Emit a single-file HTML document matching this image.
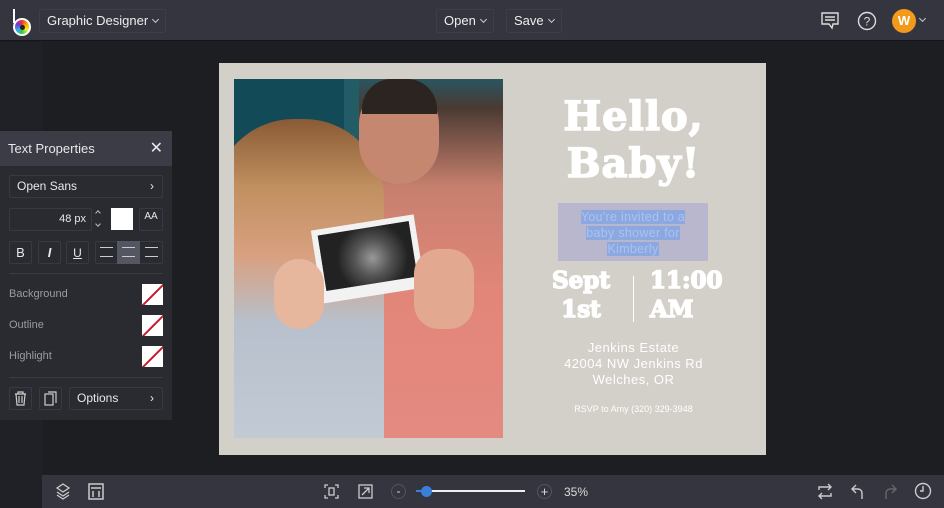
<!DOCTYPE html>
<html><head><meta charset="utf-8"><style>
*{margin:0;padding:0;box-sizing:border-box}
body{width:944px;height:508px;overflow:hidden;background:#1d1e22;font-family:"Liberation Sans",sans-serif;position:relative;color:#e8e8ea}
.abs{position:absolute}
.top{left:0;top:0;width:944px;height:41px;background:#34353f;border-bottom:1px solid #15161a}
.btn{position:absolute;top:9px;height:24px;border:1px solid #3d3e48;border-radius:2px;font-size:13px;line-height:22px;padding:0 7px;color:#eee;white-space:nowrap}
.chev{display:inline-block;width:5px;height:5px;border-right:1.2px solid #ccc;border-bottom:1.2px solid #ccc;transform:rotate(45deg);margin-left:5px;vertical-align:3px}
.side{left:0;top:42px;width:42px;height:466px;background:#202126}
.panel{left:0;top:131px;width:172px;height:289px;background:#2a2b31}
.ph{left:0;top:131px;width:172px;height:35px;background:#3b3c46;font-size:13px;line-height:35px;padding-left:8px}
.box{position:absolute;border:1px solid #383942;border-radius:2px;background:#2a2b31}
.lbl{position:absolute;left:9px;font-size:11px;color:#9a9ba3}
.sw{position:absolute;left:142px;width:21px;height:21px;background:#fff;overflow:hidden}
.sw:after{content:"";position:absolute;left:-4px;top:10px;width:30px;height:2px;background:#c21c2c;transform:rotate(-45deg)}
.card{left:219px;top:63px;width:547px;height:392px;background:#d3cfc9}
.photo{left:234px;top:79px;width:269px;height:359px;background:linear-gradient(90deg,#0f4c5a 0%,#1b5a66 30%,#245c66 45%,#2a5965 60%,#2b5864 100%);overflow:hidden}
.w{color:#fff;text-align:center;position:absolute;font-family:"DejaVu Serif","Liberation Serif",serif;font-weight:900;-webkit-text-stroke:1.5px #fff}
.bottom{left:42px;top:475px;width:902px;height:33px;background:#34353f}
</style></head><body>
<div class="abs top"></div>
<div class="abs" style="left:12px;top:9px;width:20px;height:24px">
<div class="abs" style="left:1px;top:0;width:2px;height:14px;background:#fff"></div>
<div class="abs" style="left:1px;top:9px;width:18px;height:18px;border-radius:50%;border:2px solid #fff;background:conic-gradient(#e33,#fa0,#ee3,#3c4,#3ae,#73d,#e33)"></div>
<div class="abs" style="left:8px;top:16px;width:5px;height:5px;border-radius:50%;background:#222"></div></div>
<div class="btn" style="left:39px">Graphic Designer<span class="chev"></span></div>
<div class="btn" style="left:436px">Open<span class="chev"></span></div>
<div class="btn" style="left:506px">Save<span class="chev"></span></div>
<svg class="abs" style="left:820px;top:11px" width="20" height="20" viewBox="0 0 20 20" fill="none" stroke="#ddd" stroke-width="1.4"><path d="M2 2h16v11h-5l-1 4-3-4H2z"/><path d="M5 6h10M5 9h10" /></svg>
<svg class="abs" style="left:857px;top:11px" width="20" height="20" viewBox="0 0 20 20" fill="none" stroke="#ddd" stroke-width="1.4"><circle cx="10" cy="10" r="8.5"/><text x="10" y="14.5" font-size="12" text-anchor="middle" fill="#ddd" stroke="none" font-family="Liberation Sans">?</text></svg>
<div class="abs" style="left:892px;top:9px;width:24px;height:24px;border-radius:50%;background:#f39a1a;color:#fff;font-weight:bold;font-size:13px;text-align:center;line-height:24px">W</div>
<div class="abs" style="left:920px;top:16px;width:5px;height:5px;border-right:1.2px solid #ccc;border-bottom:1.2px solid #ccc;transform:rotate(45deg)"></div>
<div class="abs side"></div>
<div class="abs card"></div>
<div class="abs photo">
<div class="abs" style="left:0;top:0;width:110px;height:140px;background:#124a58"></div>
<div class="abs" style="left:125px;top:0;width:150px;height:359px;background:linear-gradient(180deg,#2a5560 0%,#4a3a32 8%,#c7806e 30%,#e3867a 60%,#e48a80 100%)"></div>
<div class="abs" style="left:-20px;top:40px;width:170px;height:340px;border-radius:80px 80px 0 0;background:linear-gradient(180deg,#8a5a35 0%,#c09060 20%,#d9a080 40%,#b7c0cc 60%,#c4ccd6 100%)"></div>
<div class="abs" style="left:125px;top:5px;width:80px;height:100px;border-radius:40px;background:#c58770"></div>
<div class="abs" style="left:128px;top:0;width:75px;height:35px;border-radius:30px 30px 0 0;background:#2b2420"></div>
<div class="abs" style="left:82px;top:143px;width:104px;height:74px;background:#f2f2f2;transform:rotate(-9deg)"><div style="margin:6px;height:56px;background:#333 radial-gradient(circle at 55% 55%,#999 0,#555 30%,#222 60%)"></div></div>
<div class="abs" style="left:40px;top:180px;width:50px;height:70px;border-radius:25px;background:#e7b79d"></div>
<div class="abs" style="left:180px;top:170px;width:60px;height:80px;border-radius:25px;background:#e2a890"></div>
</div>
<div class="w" style="left:520px;top:93px;width:227px;font-size:40px;line-height:47px;letter-spacing:1px">Hello,<br>Baby!</div>
<div class="abs" style="left:558px;top:203px;width:150px;height:58px;background:#b8b7cd"></div>
<div class="abs" style="left:558px;top:209px;width:150px;text-align:center;font-size:12.5px;line-height:16px;color:#a8c4ee;letter-spacing:.3px"><span style="background:#8da8e0">You're invited to a<br>baby shower for<br>Kimberly</span></div>
<div class="w" style="left:536px;top:266px;width:90px;font-size:23px;line-height:29px">Sept<br>1st</div>
<div class="abs" style="left:633px;top:276px;width:1px;height:46px;background:#fff"></div>
<div class="w" style="left:640px;top:266px;width:92px;font-size:23px;line-height:29px;text-align:left;padding-left:10px">11:00<br>AM</div>
<div class="abs" style="left:540px;top:340px;width:187px;text-align:center;color:#fff;font-size:13px;line-height:16px;letter-spacing:.5px">Jenkins Estate<br>42004 NW Jenkins Rd<br>Welches, OR</div>
<div class="abs" style="left:540px;top:404px;width:187px;text-align:center;color:#fff;font-size:9px">RSVP to Amy (320) 329-3948</div>
<div class="abs panel"></div>
<div class="abs ph">Text Properties<span style="position:absolute;right:9px;font-size:16px">✕</span></div>
<div class="box" style="left:9px;top:175px;width:154px;height:23px;font-size:12px;line-height:21px;padding-left:7px">Open Sans<span style="position:absolute;right:8px">›</span></div>
<div class="box" style="left:9px;top:208px;width:83px;height:23px;font-size:11px;line-height:21px;text-align:right;padding-right:5px">48 px</div>
<div class="abs" style="left:96px;top:211px;width:4px;height:4px;border-left:1px solid #bbb;border-top:1px solid #bbb;transform:rotate(45deg)"></div>
<div class="abs" style="left:96px;top:222px;width:4px;height:4px;border-right:1px solid #bbb;border-bottom:1px solid #bbb;transform:rotate(45deg)"></div>
<div class="abs" style="left:111px;top:208px;width:22px;height:22px;background:#fff"></div>
<div class="box" style="left:139px;top:208px;width:24px;height:23px;font-size:10px;text-align:center;line-height:16px">AA</div>
<div class="box" style="left:9px;top:241px;width:23px;height:23px;text-align:center;font-size:13px;line-height:22px">B</div>
<div class="box" style="left:38px;top:241px;width:23px;height:23px;text-align:center;font-size:13px;line-height:22px;font-style:italic;font-weight:bold">I</div>
<div class="box" style="left:66px;top:241px;width:23px;height:23px;text-align:center;font-size:12px;line-height:22px;text-decoration:underline">U</div>
<div class="box" style="left:95px;top:241px;width:68px;height:23px"></div>
<div class="abs" style="left:117px;top:241px;width:23px;height:23px;background:#545662"></div>
<div class="abs" style="left:100px;top:247px;width:13px;height:10px;border-top:1.5px solid #ccc;border-bottom:1.5px solid #ccc"></div>
<div class="abs" style="left:122px;top:247px;width:13px;height:10px;border-top:1.5px solid #ccc;border-bottom:1.5px solid #ccc"></div>
<div class="abs" style="left:145px;top:247px;width:13px;height:10px;border-top:1.5px solid #ccc;border-bottom:1.5px solid #ccc"></div>
<div class="abs" style="left:9px;top:273px;width:154px;height:1px;background:#393a42"></div>
<div class="lbl" style="top:288px">Background</div><div class="sw" style="top:284px"></div>
<div class="lbl" style="top:319px">Outline</div><div class="sw" style="top:315px"></div>
<div class="lbl" style="top:350px">Highlight</div><div class="sw" style="top:346px"></div>
<div class="abs" style="left:9px;top:377px;width:154px;height:1px;background:#393a42"></div>
<div class="box" style="left:9px;top:387px;width:23px;height:23px"><svg width="21" height="21" viewBox="0 0 21 21" fill="none" stroke="#ccc" stroke-width="1.2"><path d="M5 6h11M8 6V4h5v2M6 6l1 11h7l1-11M9 8v7M12 8v7"/></svg></div>
<div class="box" style="left:39px;top:387px;width:23px;height:23px"><svg width="21" height="21" viewBox="0 0 21 21" fill="none" stroke="#ccc" stroke-width="1.2"><rect x="5" y="6" width="8" height="11"/><path d="M8 4h8v11"/></svg></div>
<div class="box" style="left:69px;top:387px;width:94px;height:23px;font-size:12px;line-height:21px;padding-left:7px">Options<span style="position:absolute;right:8px">›</span></div>
<div class="abs bottom"></div>
<svg class="abs" style="left:55px;top:483px" width="16" height="17" viewBox="0 0 16 17" fill="none" stroke="#ccc" stroke-width="1.3"><path d="M8 1l6 4-6 4-6-4zM2 9l6 4 6-4M2 12l6 4 6-4"/></svg>
<svg class="abs" style="left:88px;top:483px" width="16" height="17" viewBox="0 0 16 17" fill="none" stroke="#ccc" stroke-width="1.5"><rect x="1" y="1" width="14" height="15"/><path d="M3 5h10M5 8v6M11 8v6"/></svg>
<svg class="abs" style="left:324px;top:484px" width="15" height="15" viewBox="0 0 15 15" fill="none" stroke="#ccc" stroke-width="1.3"><path d="M1 4V1h3M11 1h3v3M14 11v3h-3M4 14H1v-3"/><rect x="5" y="4" width="5" height="7"/></svg>
<svg class="abs" style="left:358px;top:484px" width="15" height="15" viewBox="0 0 15 15" fill="none" stroke="#ccc" stroke-width="1.3"><rect x="1" y="1" width="13" height="13"/><path d="M4 11l7-7M6 4h5v5"/></svg>
<div class="abs" style="left:391px;top:484px;width:15px;height:15px;border-radius:50%;border:1px solid #555;color:#ddd;font-size:12px;text-align:center;line-height:12px">-</div>
<div class="abs" style="left:420px;top:490px;width:105px;height:2px;background:#eee"></div>
<div class="abs" style="left:416px;top:490px;width:10px;height:2px;background:#3c7fd8"></div>
<div class="abs" style="left:421px;top:486px;width:11px;height:11px;border-radius:50%;background:#3c7fd8"></div>
<div class="abs" style="left:537px;top:484px;width:15px;height:15px;border-radius:50%;border:1px solid #555;color:#ddd;font-size:13px;text-align:center;line-height:13px">+</div>
<div class="abs" style="left:564px;top:485px;font-size:12px;color:#ddd">35%</div>
<svg class="abs" style="left:817px;top:483px" width="16" height="17" viewBox="0 0 16 17" fill="none" stroke="#ccc" stroke-width="1.4"><path d="M2 7V4h12M11 1l3 3-3 3M14 10v3H2M5 16l-3-3 3-3"/></svg>
<svg class="abs" style="left:850px;top:483px" width="16" height="17" viewBox="0 0 16 17" fill="none" stroke="#ccc" stroke-width="1.4"><path d="M12 16V10a4 4 0 0 0-4-4H3M6 2L2 6l4 4"/></svg>
<svg class="abs" style="left:882px;top:483px" width="16" height="17" viewBox="0 0 16 17" fill="none" stroke="#666" stroke-width="1.4"><path d="M4 16V10a4 4 0 0 1 4-4h5M10 2l4 4-4 4"/></svg>
<svg class="abs" style="left:914px;top:482px" width="18" height="18" viewBox="0 0 18 18" fill="none" stroke="#ccc" stroke-width="1.4"><circle cx="9" cy="9" r="7.5"/><path d="M9 4v5H6"/></svg>
</body></html>
